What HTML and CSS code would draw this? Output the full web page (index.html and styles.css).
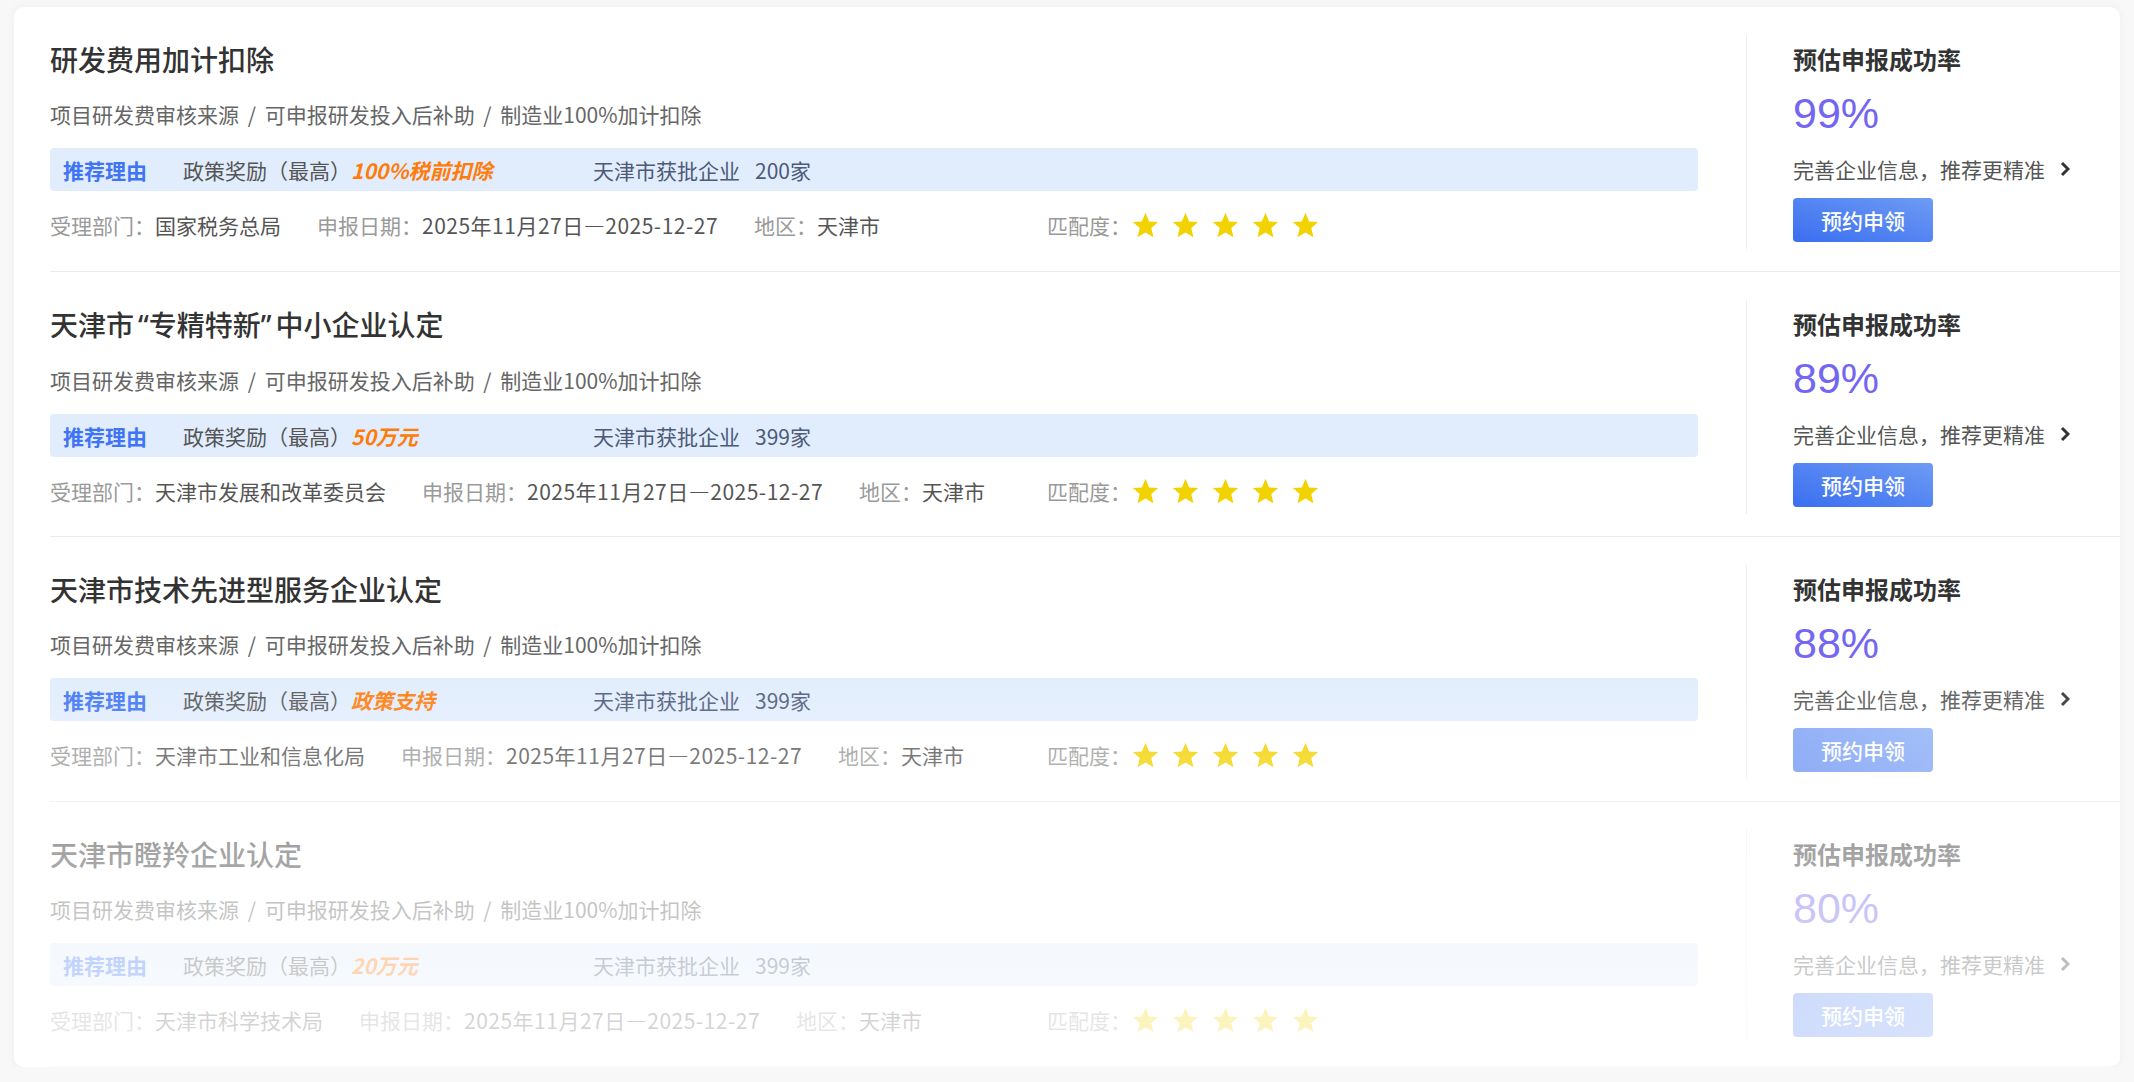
FILE: index.html
```html
<!DOCTYPE html>
<html lang="zh-CN">
<head>
<meta charset="utf-8">
<title>政策推荐</title>
<link rel="stylesheet" href="styles.css">
</head>
<body>
<div class="card">
  <div class="row">
    <div class="main">
      <div class="title">研发费用加计扣除</div>
      <div class="sub">项目研发费审核来源 / 可申报研发投入后补助 / 制造业100%加计扣除</div>
      <div class="reason">
        <div class="reason-left"><span class="tag">推荐理由</span><span class="reward">政策奖励（最高）<em>100%税前扣除</em></span></div>
        <div class="count">天津市获批企业<span class="num">200家</span></div>
      </div>
      <div class="meta">
        <div class="meta-left">
          <span class="item"><span class="k">受理部门：</span>国家税务总局</span>
          <span class="item"><span class="k">申报日期：</span><span class="date">2025年11月27日—2025-12-27</span></span>
          <span class="item"><span class="k">地区：</span>天津市</span>
        </div>
        <div class="match"><span class="k">匹配度：</span>
          <svg class="star" viewBox="0 0 24 24"><polygon points="12,1.5 15,8.6 22.5,9.2 16.8,14.1 18.6,21.8 12,17.7 5.4,21.8 7.2,14.1 1.5,9.2 9,8.6"/></svg>
          <svg class="star" viewBox="0 0 24 24"><polygon points="12,1.5 15,8.6 22.5,9.2 16.8,14.1 18.6,21.8 12,17.7 5.4,21.8 7.2,14.1 1.5,9.2 9,8.6"/></svg>
          <svg class="star" viewBox="0 0 24 24"><polygon points="12,1.5 15,8.6 22.5,9.2 16.8,14.1 18.6,21.8 12,17.7 5.4,21.8 7.2,14.1 1.5,9.2 9,8.6"/></svg>
          <svg class="star" viewBox="0 0 24 24"><polygon points="12,1.5 15,8.6 22.5,9.2 16.8,14.1 18.6,21.8 12,17.7 5.4,21.8 7.2,14.1 1.5,9.2 9,8.6"/></svg>
          <svg class="star" viewBox="0 0 24 24"><polygon points="12,1.5 15,8.6 22.5,9.2 16.8,14.1 18.6,21.8 12,17.7 5.4,21.8 7.2,14.1 1.5,9.2 9,8.6"/></svg>
        </div>
      </div>
    </div>
    <div class="side">
      <div class="side-title">预估申报成功率</div>
      <div class="rate">99%</div>
      <div class="link">完善企业信息，推荐更精准<svg class="chev" viewBox="0 0 10 16"><path d="M2 2 L8 8 L2 14"/></svg></div>
      <button class="btn">预约申领</button>
    </div>
  </div>

  <div class="row">
    <div class="main">
      <div class="title">天津市<span class="ql">“</span>专精特新<span class="qr">”</span>中小企业认定</div>
      <div class="sub">项目研发费审核来源 / 可申报研发投入后补助 / 制造业100%加计扣除</div>
      <div class="reason">
        <div class="reason-left"><span class="tag">推荐理由</span><span class="reward">政策奖励（最高）<em>50万元</em></span></div>
        <div class="count">天津市获批企业<span class="num">399家</span></div>
      </div>
      <div class="meta">
        <div class="meta-left">
          <span class="item"><span class="k">受理部门：</span>天津市发展和改革委员会</span>
          <span class="item"><span class="k">申报日期：</span><span class="date">2025年11月27日—2025-12-27</span></span>
          <span class="item"><span class="k">地区：</span>天津市</span>
        </div>
        <div class="match"><span class="k">匹配度：</span>
          <svg class="star" viewBox="0 0 24 24"><polygon points="12,1.5 15,8.6 22.5,9.2 16.8,14.1 18.6,21.8 12,17.7 5.4,21.8 7.2,14.1 1.5,9.2 9,8.6"/></svg>
          <svg class="star" viewBox="0 0 24 24"><polygon points="12,1.5 15,8.6 22.5,9.2 16.8,14.1 18.6,21.8 12,17.7 5.4,21.8 7.2,14.1 1.5,9.2 9,8.6"/></svg>
          <svg class="star" viewBox="0 0 24 24"><polygon points="12,1.5 15,8.6 22.5,9.2 16.8,14.1 18.6,21.8 12,17.7 5.4,21.8 7.2,14.1 1.5,9.2 9,8.6"/></svg>
          <svg class="star" viewBox="0 0 24 24"><polygon points="12,1.5 15,8.6 22.5,9.2 16.8,14.1 18.6,21.8 12,17.7 5.4,21.8 7.2,14.1 1.5,9.2 9,8.6"/></svg>
          <svg class="star" viewBox="0 0 24 24"><polygon points="12,1.5 15,8.6 22.5,9.2 16.8,14.1 18.6,21.8 12,17.7 5.4,21.8 7.2,14.1 1.5,9.2 9,8.6"/></svg>
        </div>
      </div>
    </div>
    <div class="side">
      <div class="side-title">预估申报成功率</div>
      <div class="rate">89%</div>
      <div class="link">完善企业信息，推荐更精准<svg class="chev" viewBox="0 0 10 16"><path d="M2 2 L8 8 L2 14"/></svg></div>
      <button class="btn">预约申领</button>
    </div>
  </div>

  <div class="row">
    <div class="main">
      <div class="title">天津市技术先进型服务企业认定</div>
      <div class="sub">项目研发费审核来源 / 可申报研发投入后补助 / 制造业100%加计扣除</div>
      <div class="reason">
        <div class="reason-left"><span class="tag">推荐理由</span><span class="reward">政策奖励（最高）<em>政策支持</em></span></div>
        <div class="count">天津市获批企业<span class="num">399家</span></div>
      </div>
      <div class="meta">
        <div class="meta-left">
          <span class="item"><span class="k">受理部门：</span>天津市工业和信息化局</span>
          <span class="item"><span class="k">申报日期：</span><span class="date">2025年11月27日—2025-12-27</span></span>
          <span class="item"><span class="k">地区：</span>天津市</span>
        </div>
        <div class="match"><span class="k">匹配度：</span>
          <svg class="star" viewBox="0 0 24 24"><polygon points="12,1.5 15,8.6 22.5,9.2 16.8,14.1 18.6,21.8 12,17.7 5.4,21.8 7.2,14.1 1.5,9.2 9,8.6"/></svg>
          <svg class="star" viewBox="0 0 24 24"><polygon points="12,1.5 15,8.6 22.5,9.2 16.8,14.1 18.6,21.8 12,17.7 5.4,21.8 7.2,14.1 1.5,9.2 9,8.6"/></svg>
          <svg class="star" viewBox="0 0 24 24"><polygon points="12,1.5 15,8.6 22.5,9.2 16.8,14.1 18.6,21.8 12,17.7 5.4,21.8 7.2,14.1 1.5,9.2 9,8.6"/></svg>
          <svg class="star" viewBox="0 0 24 24"><polygon points="12,1.5 15,8.6 22.5,9.2 16.8,14.1 18.6,21.8 12,17.7 5.4,21.8 7.2,14.1 1.5,9.2 9,8.6"/></svg>
          <svg class="star" viewBox="0 0 24 24"><polygon points="12,1.5 15,8.6 22.5,9.2 16.8,14.1 18.6,21.8 12,17.7 5.4,21.8 7.2,14.1 1.5,9.2 9,8.6"/></svg>
        </div>
      </div>
    </div>
    <div class="side">
      <div class="side-title">预估申报成功率</div>
      <div class="rate">88%</div>
      <div class="link">完善企业信息，推荐更精准<svg class="chev" viewBox="0 0 10 16"><path d="M2 2 L8 8 L2 14"/></svg></div>
      <button class="btn btn-soft">预约申领</button>
    </div>
  </div>

  <div class="row">
    <div class="main">
      <div class="title">天津市瞪羚企业认定</div>
      <div class="sub">项目研发费审核来源 / 可申报研发投入后补助 / 制造业100%加计扣除</div>
      <div class="reason">
        <div class="reason-left"><span class="tag">推荐理由</span><span class="reward">政策奖励（最高）<em>20万元</em></span></div>
        <div class="count">天津市获批企业<span class="num">399家</span></div>
      </div>
      <div class="meta">
        <div class="meta-left">
          <span class="item"><span class="k">受理部门：</span>天津市科学技术局</span>
          <span class="item"><span class="k">申报日期：</span><span class="date">2025年11月27日—2025-12-27</span></span>
          <span class="item"><span class="k">地区：</span>天津市</span>
        </div>
        <div class="match"><span class="k">匹配度：</span>
          <svg class="star" viewBox="0 0 24 24"><polygon points="12,1.5 15,8.6 22.5,9.2 16.8,14.1 18.6,21.8 12,17.7 5.4,21.8 7.2,14.1 1.5,9.2 9,8.6"/></svg>
          <svg class="star" viewBox="0 0 24 24"><polygon points="12,1.5 15,8.6 22.5,9.2 16.8,14.1 18.6,21.8 12,17.7 5.4,21.8 7.2,14.1 1.5,9.2 9,8.6"/></svg>
          <svg class="star" viewBox="0 0 24 24"><polygon points="12,1.5 15,8.6 22.5,9.2 16.8,14.1 18.6,21.8 12,17.7 5.4,21.8 7.2,14.1 1.5,9.2 9,8.6"/></svg>
          <svg class="star" viewBox="0 0 24 24"><polygon points="12,1.5 15,8.6 22.5,9.2 16.8,14.1 18.6,21.8 12,17.7 5.4,21.8 7.2,14.1 1.5,9.2 9,8.6"/></svg>
          <svg class="star" viewBox="0 0 24 24"><polygon points="12,1.5 15,8.6 22.5,9.2 16.8,14.1 18.6,21.8 12,17.7 5.4,21.8 7.2,14.1 1.5,9.2 9,8.6"/></svg>
        </div>
      </div>
    </div>
    <div class="side">
      <div class="side-title">预估申报成功率</div>
      <div class="rate">80%</div>
      <div class="link">完善企业信息，推荐更精准<svg class="chev" viewBox="0 0 10 16"><path d="M2 2 L8 8 L2 14"/></svg></div>
      <button class="btn">预约申领</button>
    </div>
  </div>
  <div class="fade"></div>
</div>
</body>
</html>
```

FILE: styles.css
```css
* { box-sizing: border-box; }
html, body { margin: 0; padding: 0; }
body {
  background: #f8f8f8;
  padding: 7px 14px 0 14px;
  font-family: "Noto Sans CJK SC", "Noto Sans", sans-serif;
  color: #333;
}
.card {
  position: relative;
  background: #fff;
  border-radius: 10px;
  box-shadow: 0 0 10px rgba(0, 0, 0, 0.05);
  padding-left: 36px;
  overflow: hidden;
}
.row {
  display: flex;
  height: 265px;
  border-bottom: 1px solid #ebebeb;
}
.row:last-of-type { border-bottom: none; height: 264px; }
.main {
  flex: 1;
  min-width: 0;
  padding-top: 32px;
}
.title {
  font-size: 28px;
  line-height: 40px;
  font-weight: 500;
  color: #333;
}
.ql, .qr { font-family: "Noto Sans", "Liberation Sans", sans-serif; }
.ql { padding-left: 4px; }
.qr { padding-right: 4px; }
.sub {
  margin-top: 20px;
  font-size: 21px;
  line-height: 30px;
  color: #666;
  word-spacing: 4px;
}
.reason {
  margin-top: 19px;
  height: 43px;
  background: #e1edfd;
  border-radius: 4px;
  display: flex;
  align-items: center;
  padding-left: 13px;
  font-size: 21px;
}
.reason-left {
  width: 530px;
  flex: none;
  display: flex;
  align-items: center;
}
.tag {
  color: #3f74f5;
  font-weight: 700;
  margin-right: 36px;
}
.reward { color: #555; }
.reward em {
  color: #ff7b0a;
  font-weight: 700;
  font-style: italic;
}
.count { color: #4d5a78; }
.count .num { margin-left: 15px; }
.meta {
  margin-top: 19px;
  display: flex;
  align-items: center;
  font-size: 21px;
  line-height: 30px;
  color: #555;
}
.meta-left {
  width: 997px;
  flex: none;
  display: flex;
  gap: 36px;
}
.date { letter-spacing: 0.5px; }
.k { color: #9a9a9a; }
.match {
  display: flex;
  align-items: center;
}
.star {
  width: 29px;
  height: 29px;
  fill: #f2d200;
  margin-right: 11px;
}
.side {
  flex: none;
  width: 374px;
  margin-left: 48px;
  margin-top: 28px;
  height: 214px;
  border-left: 1px solid #eeeeee;
  padding-left: 46px;
  padding-top: 7px;
}
.side-title {
  font-size: 24px;
  line-height: 34px;
  font-weight: 700;
  color: #333;
}
.rate {
  margin-top: 12px;
  font-family: "Liberation Sans", Arial, sans-serif;
  font-size: 43px;
  line-height: 50px;
  color: #7466f0;
}
.link {
  margin-top: 16px;
  font-size: 21px;
  line-height: 30px;
  color: #555;
  display: flex;
  align-items: center;
}
.chev {
  width: 10px;
  height: 16px;
  margin-left: 15px;
  fill: none;
  stroke: #333;
  stroke-width: 3;
}
.btn {
  display: block;
  margin-top: 14px;
  width: 140px;
  height: 44px;
  border: none;
  border-radius: 4px;
  background: linear-gradient(to top right, #3a6ef0, #6e9bf4);
  color: #fff;
  font-family: "Noto Sans CJK SC", sans-serif;
  font-size: 21px;
  font-weight: 500;
  padding: 0;
}
.btn-soft { opacity: 0.75; }
.fade {
  position: absolute;
  left: 0;
  right: 0;
  bottom: 0;
  height: 420px;
  pointer-events: none;
  background: linear-gradient(to bottom,
    rgba(255,255,255,0) 0%,
    rgba(255,255,255,0.25) 30%,
    rgba(255,255,255,0.55) 48%,
    rgba(255,255,255,0.8) 100%);
}
```
